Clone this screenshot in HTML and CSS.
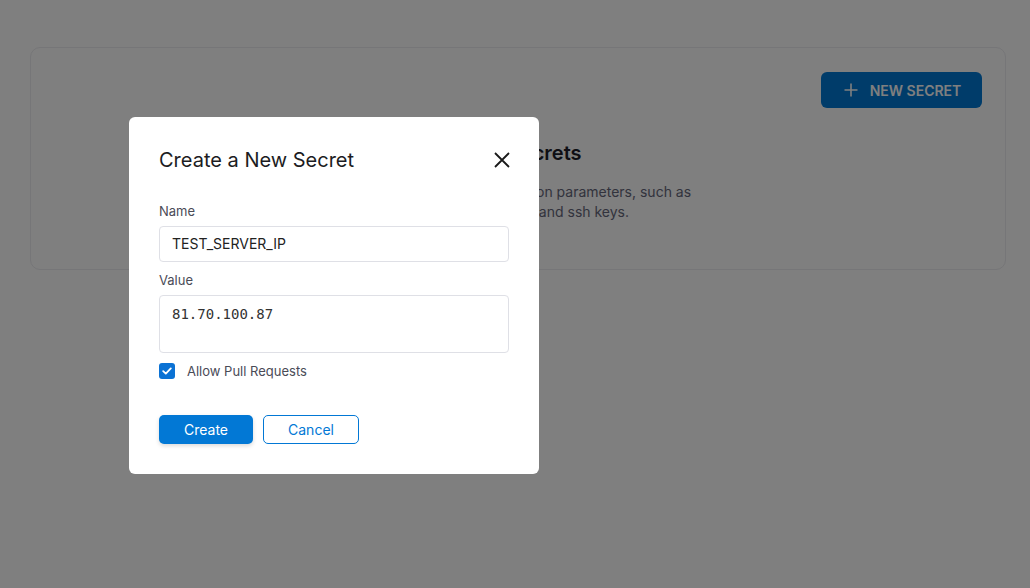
FILE: index.html
```html
<!DOCTYPE html>
<html>
<head>
<meta charset="utf-8">
<link rel="stylesheet" href="styles.css">
</head>
<body>
<main class="page">
  <section class="card">
    <div class="card-actions">
      <button class="btn-new"><svg class="plus" width="14" height="14" viewBox="0 0 14 14"><path d="M7 0.5v13M0.5 7h13" stroke="#fff" stroke-width="1.6" fill="none"/></svg><span>NEW SECRET</span></button>
    </div>
    <div class="empty">
      <h2 class="empty-title">No Secrets</h2>
      <p class="empty-text">To store sensitive configuration parameters, such as<br>passwords, tokens, and ssh keys.</p>
    </div>
  </section>
</main>
<div class="overlay">
  <div class="modal">
    <div class="modal-head">
      <h1 class="modal-title">Create a New Secret</h1>
      <svg class="close" width="16" height="16" viewBox="0 0 16 16"><path d="M1 1L15 15M15 1L1 15" stroke="#1a1a1a" stroke-width="1.8" fill="none"/></svg>
    </div>
    <label class="field-label">Name</label>
    <div class="input">TEST_SERVER_IP</div>
    <label class="field-label">Value</label>
    <div class="textarea">81.70.100.87</div>
    <div class="check-row">
      <span class="checkbox"><svg width="10" height="8" viewBox="0 0 10 8"><path d="M1.2 4.2L3.8 6.6L8.8 1.4" stroke="#fff" stroke-width="1.8" fill="none" stroke-linecap="round" stroke-linejoin="round"/></svg></span>
      <span class="check-label">Allow Pull Requests</span>
    </div>
    <div class="actions">
      <button class="btn-primary">Create</button>
      <button class="btn-outline">Cancel</button>
    </div>
  </div>
</div>
</body>
</html>
```

FILE: styles.css
```css
* { box-sizing: border-box; }
html, body { margin: 0; padding: 0; }
body {
  width: 1030px;
  height: 588px;
  background: #ffffff;
  font-family: Inter, "Noto Sans", sans-serif;
  position: relative;
  overflow: hidden;
}
.page {
  padding: 47px 24px 0 30px;
}
.card {
  height: 223px;
  border: 1px solid #ececf0;
  border-radius: 10px;
  background: #fefefe;
  padding: 24px 23px 0 0;
}
.card-actions {
  display: flex;
  justify-content: flex-end;
}
.btn-new {
  width: 161px;
  height: 36px;
  background: #0078d4;
  border: none;
  border-radius: 6px;
  color: #fff;
  font-family: Inter, sans-serif;
  font-weight: 600;
  font-size: 14px;
  display: flex;
  align-items: center;
  justify-content: center;
  gap: 12px;
  padding: 0 0 0 2px;
}
.empty {
  text-align: center;
  margin-top: 30px;
  padding-left: 23px;
}
.empty-title {
  margin: 0;
  font-size: 20px;
  font-weight: 600;
  color: #1c1c28;
  line-height: 30px;
  padding-left: 21px;
}
.empty-text {
  margin: 14px 0 0;
  font-size: 14px;
  line-height: 20px;
  color: #65677a;
}
.overlay {
  position: absolute;
  inset: 0;
  background: rgba(0, 0, 0, 0.5);
}
.modal {
  position: absolute;
  left: 129px;
  top: 117px;
  width: 410px;
  height: 357px;
  background: #fff;
  border-radius: 6px;
  padding: 30px 30px 0 30px;
}
.modal-head {
  display: flex;
  justify-content: space-between;
  align-items: center;
  height: 26px;
  margin-bottom: 30px;
}
.modal-title {
  margin: 0;
  font-size: 20px;
  font-weight: 400;
  color: #1c1c22;
  line-height: 26px;
}
.close { margin-right: -1px; }
.field-label {
  display: block;
  font-size: 13px;
  color: #4a4b57;
  line-height: 16px;
  margin-bottom: 7px;
}
.input {
  height: 36px;
  border: 1px solid #dfe0e6;
  border-radius: 4px;
  padding: 0 12px;
  font-size: 14px;
  color: #222;
  line-height: 34px;
  margin-bottom: 10px;
}
.textarea {
  height: 58px;
  border: 1px solid #dfe0e6;
  border-radius: 4px;
  padding: 9px 12px;
  font-family: "DejaVu Sans Mono", monospace;
  font-size: 14px;
  color: #333;
  line-height: 18px;
}
.check-row {
  display: flex;
  align-items: center;
  margin-top: 9px;
  height: 18px;
}
.checkbox {
  width: 16px;
  height: 16px;
  border-radius: 3px;
  background: #0b72d4;
  display: flex;
  align-items: center;
  justify-content: center;
}
.check-label {
  margin-left: 12px;
  font-size: 13px;
  color: #4a4b57;
}
.actions {
  display: flex;
  gap: 10px;
  margin-top: 35px;
}
.btn-primary, .btn-outline {
  height: 29px;
  border-radius: 5px;
  font-family: Inter, sans-serif;
  font-size: 14px;
  padding: 0;
}
.btn-primary {
  width: 94px;
  background: #0278d5;
  color: #fff;
  border: none;
  box-shadow: 0 2px 4px rgba(0, 0, 0, 0.15);
}
.btn-outline {
  width: 96px;
  background: #fff;
  color: #0278d5;
  border: 1px solid #0278d5;
}
```
